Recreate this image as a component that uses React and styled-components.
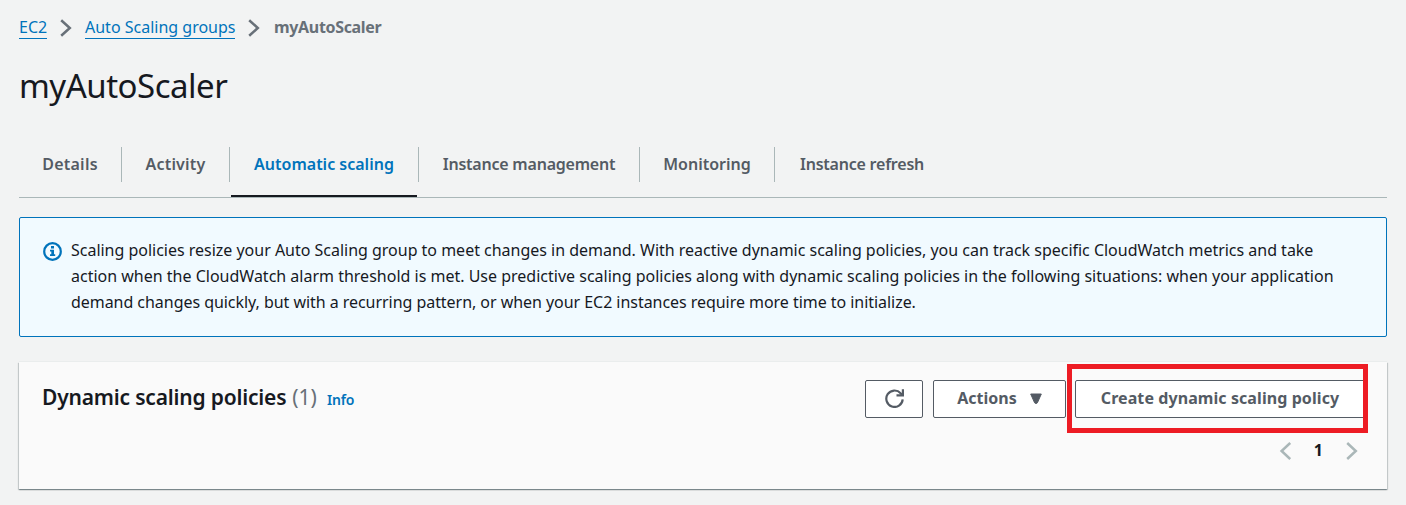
import React from "react";
import styled, { createGlobalStyle } from "styled-components";

const GlobalStyle = createGlobalStyle`
  * { box-sizing: border-box; }
  body {
    margin: 0;
    background: #f2f3f3;
    color: #16191f;
    font-family: "Noto Sans", "Open Sans", sans-serif;
    font-size: 16px;
  }
`;

const Label = styled.span`
  letter-spacing: ${(p) => p.$track || 0}px;
  white-space: nowrap;
`;

const Page = styled.main`
  height: 505px;
  padding: 14px 19px 0;
  overflow: hidden;
`;

const Breadcrumbs = styled.nav`
  display: flex;
  align-items: center;
  height: 27px;
  color: #687078;
  font-weight: 700;
`;

const Crumb = styled.a`
  width: ${(p) => p.$width}px;
  height: 24px;
  margin-top: -1px;
  line-height: 25px;
  color: #0073bb;
  font-weight: 400;
  border-bottom: 1px solid #0073bb;
  white-space: nowrap;
`;

const CurrentCrumb = styled.span`
  margin: -1px 0 0 1px;
`;

const CrumbArrow = styled.svg`
  flex: none;
  width: 12px;
  height: 18px;
  margin: 1px 13px 0 13px;
`;

const Title = styled.h1`
  height: 40px;
  margin: 25px 0 0;
  font-size: 33px;
  line-height: 40px;
  font-weight: 400;
`;

const Tabs = styled.div`
  display: flex;
  height: 73px;
  margin-top: 19px;
  padding-top: 22px;
  border-bottom: 1px solid #aab7b8;
  margin-bottom: 19px;
`;

const Tab = styled.button`
  position: relative;
  width: ${(p) => p.$width}px;
  height: 35px;
  padding: 0 0 1px;
  border: 0;
  border-right: ${(p) => (p.$last ? 0 : 1)}px solid #aab7b8;
  background: none;
  color: ${(p) => (p.$active ? "#0073bb" : "#545b64")};
  font: 600 16px/34px "Noto Sans", sans-serif;
  text-align: center;
  &::after {
    content: "";
    display: ${(p) => (p.$active ? "block" : "none")};
    position: absolute;
    left: 1px;
    right: 1px;
    bottom: -15px;
    height: 2px;
    background: #16191f;
  }
`;

const Alert = styled.section`
  display: flex;
  height: 120px;
  padding: 19px 23px;
  border: 1px solid #0073bb;
  border-radius: 2px;
  background: #f1faff;
`;

const InfoIcon = styled.svg`
  flex: none;
  width: 19px;
  height: 19px;
  margin: 5px 9px 0 0;
`;

const AlertText = styled.div`
  display: flex;
  flex-direction: column;
  line-height: 26px;
`;

const Panel = styled.section`
  height: 127px;
  margin-top: 25px;
  padding: 18px 23px 0;
  background: #fafafa;
  box-shadow: 0 -1px 0 #eaeded, 0 1px 1px 0 rgba(0, 28, 36, 0.3), 1px 1px 1px 0 rgba(0, 28, 36, 0.15), -1px 1px 1px 0 rgba(0, 28, 36, 0.15);
`;

const PanelHeader = styled.header`
  display: flex;
  justify-content: space-between;
`;

const Heading = styled.h2`
  display: flex;
  align-items: baseline;
  margin: 0;
  font-size: 21px;
  line-height: 34px;
  font-weight: 600;
`;

const Counter = styled.span`
  margin-left: 6px;
  color: #687078;
  font-weight: 400;
`;

const InfoLink = styled.a`
  margin-left: 10px;
  color: #0073bb;
  font-size: 14px;
`;

const Actions = styled.div`
  display: flex;
  gap: 10px;
`;

const Button = styled.button`
  display: flex;
  align-items: center;
  justify-content: center;
  gap: 13px;
  width: ${(p) => p.$width}px;
  height: 38px;
  padding: 0 0 2px;
  border: 1px solid #545b64;
  border-radius: 2px;
  background: #fff;
  color: #545b64;
  font: 700 16px/34px "Noto Sans", sans-serif;
`;

const Icon = styled.svg`
  flex: none;
  width: ${(p) => p.$w}px;
  height: ${(p) => p.$h}px;
`;

const PageArrow = styled(Icon)`
  margin-top: 2px;
`;

const Highlight = styled.div`
  width: 301px;
  height: 69px;
  margin: -16px -4px -15px -9px;
  padding: 11px 0 0 3px;
  border: 5px solid #ed1c24;
  overflow: hidden;
`;

const Pagination = styled.div`
  display: flex;
  justify-content: flex-end;
  align-items: center;
  gap: 23px;
  height: 24px;
  margin-top: 20px;
  padding-right: 6px;
  font-weight: 700;
`;

const tabs = [
  { label: "Details", width: 103, track: 0.25 },
  { label: "Activity", width: 108, track: 0.2 },
  { label: "Automatic scaling", width: 189, track: 0, active: true },
  { label: "Instance management", width: 221, track: -0.22 },
  { label: "Monitoring", width: 135, track: 0 },
  { label: "Instance refresh", width: 174, track: -0.22 },
];

const alertLines = [
  { text: "Scaling policies resize your Auto Scaling group to meet changes in demand. With reactive dynamic scaling policies, you can track specific CloudWatch metrics and take", track: -0.015 },
  { text: "action when the CloudWatch alarm threshold is met. Use predictive scaling policies along with dynamic scaling policies in the following situations: when your application", track: 0 },
  { text: "demand changes quickly, but with a recurring pattern, or when your EC2 instances require more time to initialize.", track: -0.045 },
];

function Separator() {
  return (
    <CrumbArrow viewBox="0 0 12 18">
      <path d="M1.2 1.2 9.8 9 1.2 16.8" fill="none" stroke="#687078" strokeWidth="2.5" />
    </CrumbArrow>
  );
}

export default function App() {
  return (
    <>
      <GlobalStyle />
      <Page>
        <Breadcrumbs>
          <Crumb $width={28}><Label>EC2</Label></Crumb>
          <Separator />
          <Crumb $width={150}><Label>Auto Scaling groups</Label></Crumb>
          <Separator />
          <CurrentCrumb><Label $track={-0.33}>myAutoScaler</Label></CurrentCrumb>
        </Breadcrumbs>
        <Title><Label $track={-0.5}>myAutoScaler</Label></Title>
        <Tabs>
          {tabs.map((t, i) => (
            <Tab key={t.label} $width={t.width} $active={t.active} $last={i === tabs.length - 1}>
              <Label $track={t.track}>{t.label}</Label>
            </Tab>
          ))}
        </Tabs>
        <Alert>
          <InfoIcon viewBox="0 0 19 19">
            <circle cx="9.5" cy="9.5" r="8.3" fill="none" stroke="#0073bb" strokeWidth="2.2" />
            <path d="M8 4h3v2.4H8zM7 7.7h4v4.6h1.2V14H7v-1.7h1.3V9.4H7z" fill="#0073bb" />
          </InfoIcon>
          <AlertText>
            {alertLines.map((l) => <Label key={l.text} $track={l.track}>{l.text}</Label>)}
          </AlertText>
        </Alert>
        <Panel>
          <PanelHeader>
            <Heading>
              <Label $track={-0.19}>Dynamic scaling policies</Label>
              <Counter><Label>(1)</Label></Counter>
              <InfoLink><Label $track={-0.2}>Info</Label></InfoLink>
            </Heading>
            <Actions>
              <Button $width={58} aria-label="Refresh">
                <Icon $w={20} $h={20} viewBox="0 0 20 20" fill="none" stroke="#545b64" strokeWidth="2.2">
                  <path d="M18.7 11.4A8.2 8.2 0 1 1 16.6 5.2L18.6 7.2" />
                  <path d="M18.9 1.2v6.2h-6.4" />
                </Icon>
              </Button>
              <Button $width={133}>
                <Label>Actions</Label>
                <Icon $w={12} $h={11} viewBox="0 0 12 11">
                  <path d="M.7 1h10.6L7.4 9.8Q6 11.4 4.6 9.8z" fill="#545b64" stroke="#545b64" strokeLinejoin="round" />
                </Icon>
              </Button>
              <Highlight>
                <Button $width={290}><Label $track={0.08}>Create dynamic scaling policy</Label></Button>
              </Highlight>
            </Actions>
          </PanelHeader>
          <Pagination>
            <PageArrow $w={12} $h={18} viewBox="0 0 12 18" fill="none" stroke="#aab7b8" strokeWidth="2.5">
              <path d="M11.2 1 2.6 9l8.6 8" />
            </PageArrow>
            <Label>1</Label>
            <PageArrow $w={12} $h={18} viewBox="0 0 12 18" fill="none" stroke="#aab7b8" strokeWidth="2.5">
              <path d="m1.2 1 8.6 8-8.6 8" />
            </PageArrow>
          </Pagination>
        </Panel>
      </Page>
    </>
  );
}
